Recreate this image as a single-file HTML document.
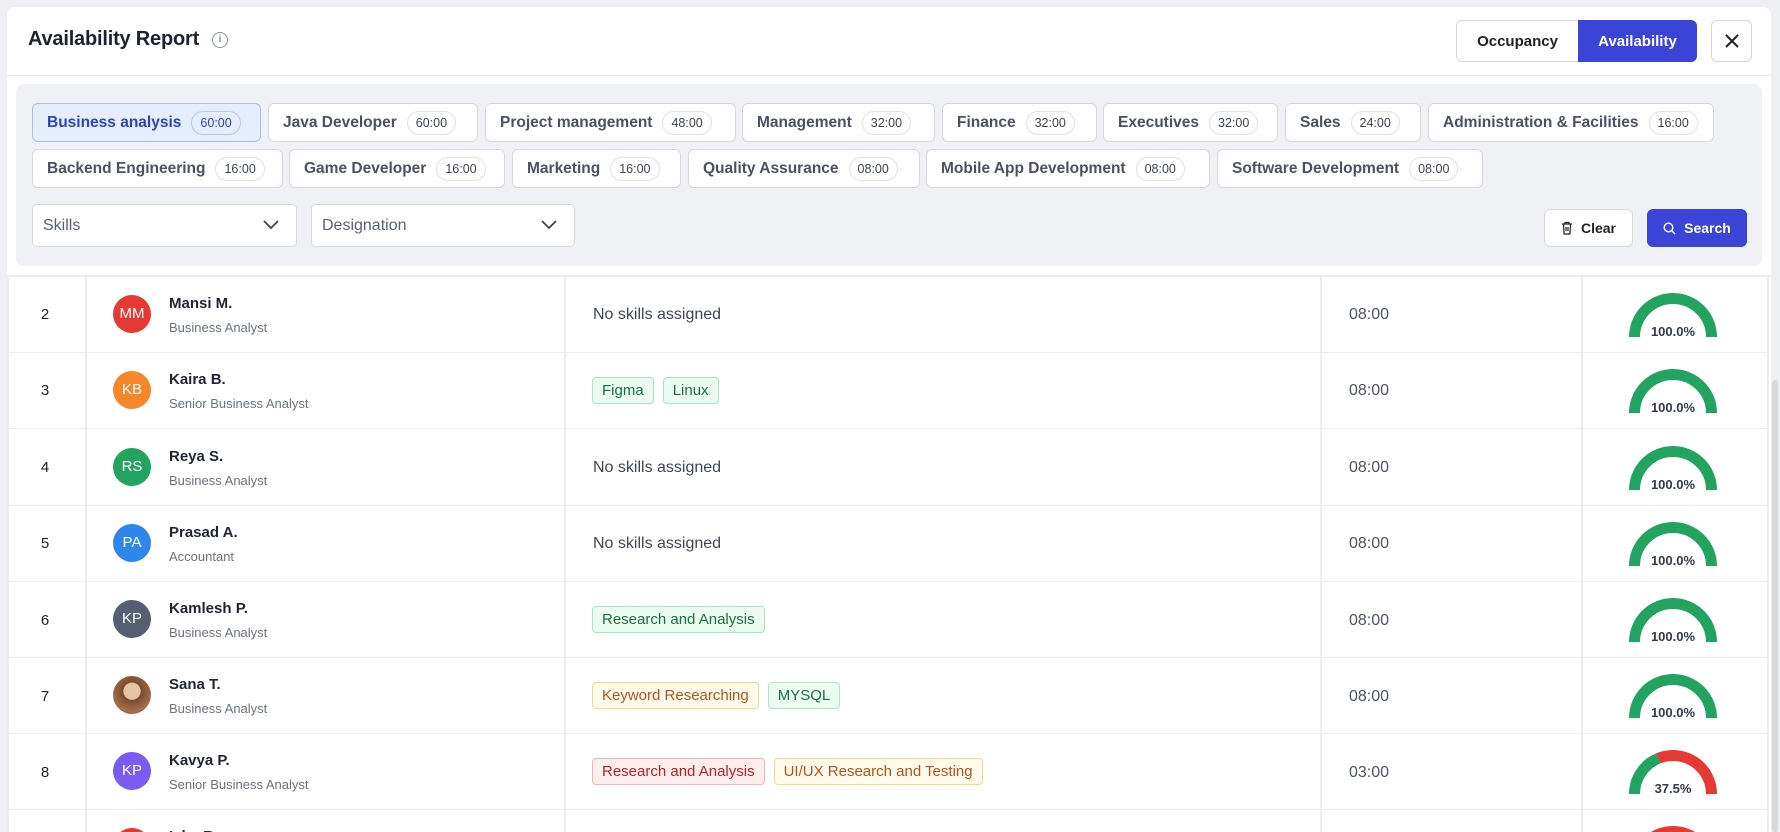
<!DOCTYPE html>
<html><head><meta charset="utf-8"><style>
*{box-sizing:border-box;margin:0;padding:0}
html,body{width:1780px;height:832px;overflow:hidden}
body{background:#eef0f4;font-family:"Liberation Sans",Arial,sans-serif;color:#1f2533}
#w{position:relative;width:1780px;height:832px;overflow:hidden}
.abs{position:absolute}
.card{left:7px;top:7px;width:1764px;height:825px;background:#fff;border-radius:8px 8px 0 0}
.title{left:28px;top:28px;font-size:20px;font-weight:bold;color:#1d2230;letter-spacing:-0.2px}
.info{left:212px;top:32px;width:16px;height:16px;border:1.5px solid #8a8f9c;border-radius:50%;font-size:10px;color:#8a8f9c;text-align:center;line-height:13px;font-weight:bold}
.hline{left:7px;top:75px;width:1764px;height:1px;background:#e6e8ec}
.tog{top:20px;height:42px;border:1px solid #d3d6dd;font-size:15px;font-weight:bold;display:flex;align-items:center;justify-content:center}
.panel{left:16px;top:84px;width:1746px;height:182px;background:#f0f1f5;border-radius:8px}
.chip{height:39px;background:#fff;border:1px solid #d5d8df;border-radius:6px;display:flex;align-items:center;padding-left:14px;font-size:15.5px;font-weight:bold;color:#4a5262;white-space:nowrap}
.chip b{margin-left:10px;font-weight:normal;font-size:12.5px;border:1px solid #dfe2e8;border-radius:12px;padding:4px 8px;color:#3c4352}
.chip.act{background:#e6eefc;border-color:#a9bff0;color:#2c46b8}
.chip.act b{border-color:#b7c8f0;color:#2c46b8}
.dd{top:204px;height:43px;background:#fff;border:1px solid #d5d8df;border-radius:5px;font-size:16px;color:#5a6170;padding:12px 0 0 10px}
.dd svg{position:absolute;right:16px;top:14px}
.btn{top:209px;height:38px;border-radius:6px;font-size:14px;font-weight:bold;display:flex;align-items:center;justify-content:center;gap:8px}
.row{left:7px;width:1761px;height:77px;border-bottom:1.5px solid #ebedf0}
.vl{top:276px;width:1.5px;height:556px;background:#ebedf0}
.num{left:38px;width:14px;text-align:center;font-size:15px;color:#222}
.av{left:113px;width:38px;height:38px;border-radius:50%;color:#fff;font-size:15px;text-align:center;line-height:38px}
.nm{left:169px;font-size:15px;font-weight:bold;color:#1f2533}
.rl{left:169px;font-size:13px;color:#6b7280}
.sk{left:593px;font-size:16px;color:#3e4553}
.tags{left:592px;display:flex;gap:9px}
.tag{height:27px;border-radius:4px;font-size:15px;padding:0 9px;line-height:25px;border:1px solid}
.g{background:#ebfbf1;border-color:#a8e8c0;color:#17703e}
.o{background:#fffaeb;border-color:#f8d78f;color:#b4541a}
.r{background:#fdeeee;border-color:#f5b5b5;color:#b42323}
.tm{left:1349px;font-size:16px;color:#4b5262}
.ga{left:1629px}
.scroll{left:1772px;top:380px;width:6px;height:452px;background:#d6d8dc;border-radius:3px}
</style></head><body><div id="w">
<div class="abs card"></div>
<div class="abs title">Availability Report</div>
<div class="abs info">i</div>
<div class="abs hline"></div>
<div class="abs tog" style="left:1456px;width:123px;border-radius:6px 0 0 6px;color:#222;background:#fff">Occupancy</div>
<div class="abs tog" style="left:1578px;width:119px;border-radius:0 6px 6px 0;background:#3a45d8;border-color:#3a45d8;color:#fff">Availability</div>
<div class="abs tog" style="left:1711px;width:41px;border-radius:6px;background:#fff"><svg width="16" height="16" viewBox="0 0 16 16"><path d="M2 2L14 14M14 2L2 14" stroke="#222" stroke-width="2"/></svg></div>

<div class="abs panel"></div>
<div class="abs chip act" style="left:32px;top:103px;width:229px">Business analysis<b>60:00</b></div>
<div class="abs chip" style="left:268px;top:103px;width:210px">Java Developer<b>60:00</b></div>
<div class="abs chip" style="left:485px;top:103px;width:251px">Project management<b>48:00</b></div>
<div class="abs chip" style="left:742px;top:103px;width:193px">Management<b>32:00</b></div>
<div class="abs chip" style="left:942px;top:103px;width:155px">Finance<b>32:00</b></div>
<div class="abs chip" style="left:1103px;top:103px;width:175px">Executives<b>32:00</b></div>
<div class="abs chip" style="left:1285px;top:103px;width:136px">Sales<b>24:00</b></div>
<div class="abs chip" style="left:1428px;top:103px;width:286px">Administration &amp; Facilities<b>16:00</b></div>
<div class="abs chip" style="left:32px;top:149px;width:251px">Backend Engineering<b>16:00</b></div>
<div class="abs chip" style="left:289px;top:149px;width:216px">Game Developer<b>16:00</b></div>
<div class="abs chip" style="left:512px;top:149px;width:169px">Marketing<b>16:00</b></div>
<div class="abs chip" style="left:688px;top:149px;width:232px">Quality Assurance<b>08:00</b></div>
<div class="abs chip" style="left:926px;top:149px;width:284px">Mobile App Development<b>08:00</b></div>
<div class="abs chip" style="left:1217px;top:149px;width:266px">Software Development<b>08:00</b></div>

<div class="abs dd" style="left:32px;width:265px">Skills<svg width="18" height="12" viewBox="0 0 18 12"><path d="M2 2L9 9L16 2" fill="none" stroke="#444" stroke-width="1.8"/></svg></div>
<div class="abs dd" style="left:311px;width:264px">Designation<svg width="18" height="12" viewBox="0 0 18 12"><path d="M2 2L9 9L16 2" fill="none" stroke="#444" stroke-width="1.8"/></svg></div>
<div class="abs btn" style="left:1544px;width:89px;background:#fff;border:1px solid #d5d8df;color:#222"><svg width="12" height="14" viewBox="0 0 12 14"><path d="M1 3H11M4 3V1.5H8V3M2.5 3L3 13H9L9.5 3M5 6V10M7 6V10" fill="none" stroke="#222" stroke-width="1.2"/></svg>Clear</div>
<div class="abs btn" style="left:1647px;width:100px;background:#3a45d8;color:#fff"><svg width="13" height="13" viewBox="0 0 13 13"><circle cx="5.5" cy="5.5" r="4.3" fill="none" stroke="#fff" stroke-width="1.4"/><path d="M8.8 8.8L12 12" stroke="#fff" stroke-width="1.4"/></svg>Search</div>

<div class="abs" style="left:7px;top:275px;width:1764px;height:2px;background:#ebedf0"></div>
<div class="abs vl" style="left:7px"></div>
<div class="abs vl" style="left:85px"></div>
<div class="abs vl" style="left:564px"></div>
<div class="abs vl" style="left:1320px"></div>
<div class="abs vl" style="left:1581px"></div>
<div class="abs vl" style="left:1767px"></div>
<div class="abs scroll"></div>

<div class="abs row" style="top:276px"></div>
<div class="abs num" style="top:306px">2</div>
<div class="abs av" style="top:295px;background:#e53935">MM</div>
<div class="abs nm" style="top:295px">Mansi M.</div>
<div class="abs rl" style="top:320px">Business Analyst</div>
<div class="abs sk" style="top:306px">No skills assigned</div>
<div class="abs tm" style="top:306px">08:00</div>
<svg class="abs ga" style="top:292px" width="88" height="46" viewBox="0 0 88 46"><path d="M5.5 45A38.5 38.5 0 0 1 82.5 45" fill="none" stroke="#22a35f" stroke-width="11"/><text x="44" y="44" text-anchor="middle" font-size="13" font-weight="bold" fill="#333a48" font-family="Liberation Sans">100.0%</text></svg>

<div class="abs row" style="top:352px"></div>
<div class="abs num" style="top:382px">3</div>
<div class="abs av" style="top:371px;background:#f5862a">KB</div>
<div class="abs nm" style="top:371px">Kaira B.</div>
<div class="abs rl" style="top:396px">Senior Business Analyst</div>
<div class="abs tags" style="top:377px"><span class="tag g">Figma</span><span class="tag g">Linux</span></div>
<div class="abs tm" style="top:382px">08:00</div>
<svg class="abs ga" style="top:368px" width="88" height="46" viewBox="0 0 88 46"><path d="M5.5 45A38.5 38.5 0 0 1 82.5 45" fill="none" stroke="#22a35f" stroke-width="11"/><text x="44" y="44" text-anchor="middle" font-size="13" font-weight="bold" fill="#333a48" font-family="Liberation Sans">100.0%</text></svg>

<div class="abs row" style="top:429px"></div>
<div class="abs num" style="top:459px">4</div>
<div class="abs av" style="top:448px;background:#22a35f">RS</div>
<div class="abs nm" style="top:448px">Reya S.</div>
<div class="abs rl" style="top:473px">Business Analyst</div>
<div class="abs sk" style="top:459px">No skills assigned</div>
<div class="abs tm" style="top:459px">08:00</div>
<svg class="abs ga" style="top:445px" width="88" height="46" viewBox="0 0 88 46"><path d="M5.5 45A38.5 38.5 0 0 1 82.5 45" fill="none" stroke="#22a35f" stroke-width="11"/><text x="44" y="44" text-anchor="middle" font-size="13" font-weight="bold" fill="#333a48" font-family="Liberation Sans">100.0%</text></svg>

<div class="abs row" style="top:505px"></div>
<div class="abs num" style="top:535px">5</div>
<div class="abs av" style="top:524px;background:#2f86ea">PA</div>
<div class="abs nm" style="top:524px">Prasad A.</div>
<div class="abs rl" style="top:549px">Accountant</div>
<div class="abs sk" style="top:535px">No skills assigned</div>
<div class="abs tm" style="top:535px">08:00</div>
<svg class="abs ga" style="top:521px" width="88" height="46" viewBox="0 0 88 46"><path d="M5.5 45A38.5 38.5 0 0 1 82.5 45" fill="none" stroke="#22a35f" stroke-width="11"/><text x="44" y="44" text-anchor="middle" font-size="13" font-weight="bold" fill="#333a48" font-family="Liberation Sans">100.0%</text></svg>

<div class="abs row" style="top:581px"></div>
<div class="abs num" style="top:612px">6</div>
<div class="abs av" style="top:600px;background:#565f72">KP</div>
<div class="abs nm" style="top:600px">Kamlesh P.</div>
<div class="abs rl" style="top:625px">Business Analyst</div>
<div class="abs tags" style="top:606px"><span class="tag g">Research and Analysis</span></div>
<div class="abs tm" style="top:612px">08:00</div>
<svg class="abs ga" style="top:597px" width="88" height="46" viewBox="0 0 88 46"><path d="M5.5 45A38.5 38.5 0 0 1 82.5 45" fill="none" stroke="#22a35f" stroke-width="11"/><text x="44" y="44" text-anchor="middle" font-size="13" font-weight="bold" fill="#333a48" font-family="Liberation Sans">100.0%</text></svg>

<div class="abs row" style="top:657px"></div>
<div class="abs num" style="top:688px">7</div>
<div class="abs av" style="top:676px;background:radial-gradient(circle at 50% 40%,#e7c3a6 0 28%,#7a4a2e 30%,#a5704c 70%,#5a3420 100%)"></div>
<div class="abs nm" style="top:676px">Sana T.</div>
<div class="abs rl" style="top:701px">Business Analyst</div>
<div class="abs tags" style="top:682px"><span class="tag o">Keyword Researching</span><span class="tag g">MYSQL</span></div>
<div class="abs tm" style="top:688px">08:00</div>
<svg class="abs ga" style="top:673px" width="88" height="46" viewBox="0 0 88 46"><path d="M5.5 45A38.5 38.5 0 0 1 82.5 45" fill="none" stroke="#22a35f" stroke-width="11"/><text x="44" y="44" text-anchor="middle" font-size="13" font-weight="bold" fill="#333a48" font-family="Liberation Sans">100.0%</text></svg>

<div class="abs row" style="top:733px"></div>
<div class="abs num" style="top:764px">8</div>
<div class="abs av" style="top:752px;background:#7b5cf0">KP</div>
<div class="abs nm" style="top:752px">Kavya P.</div>
<div class="abs rl" style="top:777px">Senior Business Analyst</div>
<div class="abs tags" style="top:758px"><span class="tag r">Research and Analysis</span><span class="tag o">UI/UX Research and Testing</span></div>
<div class="abs tm" style="top:764px">03:00</div>
<svg class="abs ga" style="top:749px" width="88" height="46" viewBox="0 0 88 46"><path d="M5.5 45A38.5 38.5 0 0 1 29.3 9.4" fill="none" stroke="#22a35f" stroke-width="11"/><path d="M29.3 9.4A38.5 38.5 0 0 1 82.5 45" fill="none" stroke="#e53935" stroke-width="11"/><text x="44" y="44" text-anchor="middle" font-size="13" font-weight="bold" fill="#333a48" font-family="Liberation Sans">37.5%</text></svg>

<div class="abs av" style="top:828px;background:#e53935"></div>
<div class="abs nm" style="top:828px">Isha R.</div>
<svg class="abs ga" style="top:825px" width="88" height="46" viewBox="0 0 88 46"><path d="M5.5 45A38.5 38.5 0 0 1 82.5 45" fill="none" stroke="#e53935" stroke-width="11"/></svg>
</div></body></html>
